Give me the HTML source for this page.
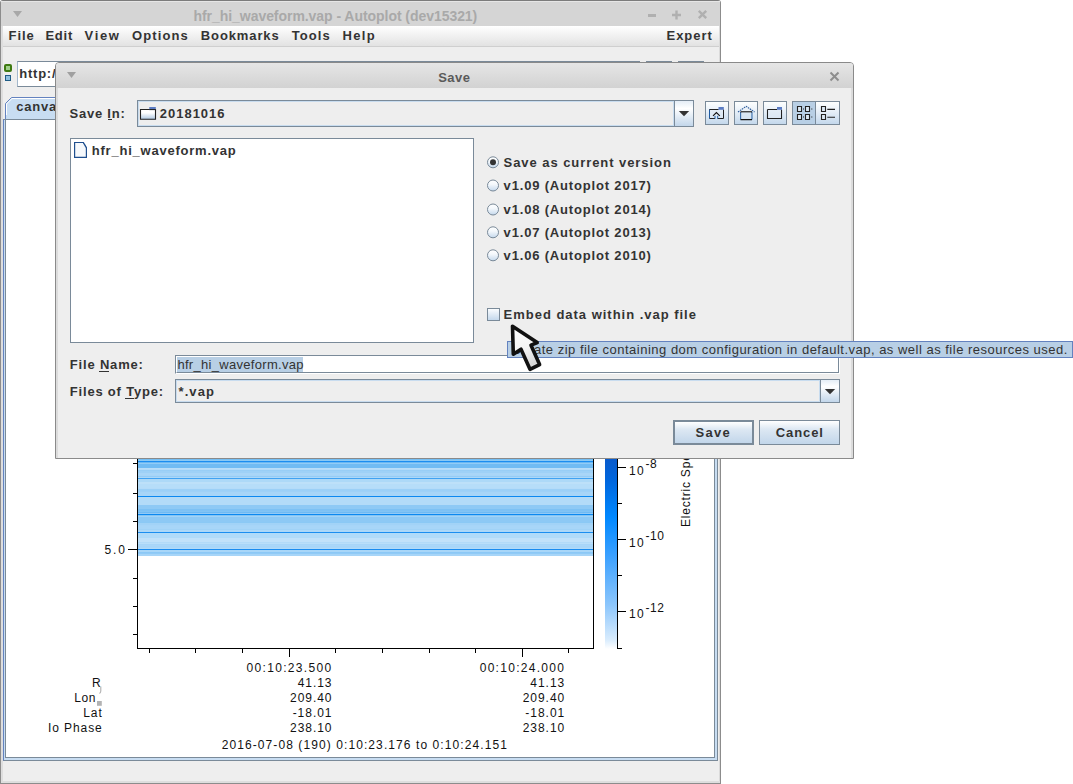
<!DOCTYPE html>
<html><head><meta charset="utf-8">
<style>
html,body{margin:0;padding:0;}
body{width:1073px;height:784px;position:relative;overflow:hidden;background:#fff;font-family:"Liberation Sans",sans-serif;}
.a{position:absolute;box-sizing:border-box;}
.t{position:absolute;white-space:pre;font-family:"Liberation Sans",sans-serif;}
</style></head><body>

<!-- ============ MAIN WINDOW ============ -->
<div class="a" style="left:0;top:0;width:721px;height:784px;background:#eeeeee;border-left:1px solid #8c8c8c;border-top:1px solid #7c7c7c;border-right:1px solid #8c8c8c;border-bottom:1px solid #8c8c8c;border-top-left-radius:3px;border-top-right-radius:3px;z-index:1"></div>
<div class="a" style="left:1px;top:1px;width:719px;height:1px;background:#e6e6e6;z-index:1"></div>
<!-- title bar -->
<div class="a" style="left:1px;top:2px;width:719px;height:24px;background:#d5d5d5;z-index:1"></div>
<svg class="a" style="left:12px;top:10px;z-index:2" width="12" height="8"><path d="M1 1 L10 1 L5.5 7 Z" fill="#a8a8a8"/></svg>
<div class="a" style="left:648px;top:14px;width:8px;height:2.5px;background:#b0b0b0;z-index:2"></div>
<svg class="a" style="left:671px;top:9px;z-index:2" width="12" height="12"><path d="M5.5 1.5 V10.5 M1 6 H10" stroke="#b0b0b0" stroke-width="2.4"/></svg>
<svg class="a" style="left:697px;top:9px;z-index:2" width="12" height="12"><path d="M1.8 1.8 L9.2 9.2 M9.2 1.8 L1.8 9.2" stroke="#b0b0b0" stroke-width="2.4"/></svg>
<!-- menu bar -->
<div class="a" style="left:3px;top:26px;width:716px;height:20px;background:linear-gradient(#ffffff,#e2e2e2);z-index:1"></div>
<div class="a" style="left:1px;top:46px;width:718px;height:1px;background:#cfcfcf;z-index:1"></div>
<div class="a" style="left:719px;top:26px;width:1px;height:757px;background:#dadada;z-index:1"></div>
<div class="a" style="left:1px;top:26px;width:2px;height:757px;background:#dedede;z-index:1"></div>
<div class="a" style="left:1px;top:781px;width:719px;height:2px;background:#dedede;z-index:1"></div>

<!-- toolbar icons -->
<div class="a" style="left:4px;top:64px;width:8px;height:8px;background:#9fd08a;border:2px solid #3f7a12;border-radius:2px;z-index:2"></div>
<div class="a" style="left:5px;top:75px;width:6px;height:6px;background:#8fc0e0;border:1px solid #1f5c85;z-index:2"></div>
<!-- URL field -->
<div class="a" style="left:17px;top:61px;width:610px;height:26px;background:#fff;border:1px solid #7a8a99;border-right:none;border-left-color:#a3b8cc;z-index:2"></div>
<div class="a" style="left:620px;top:61px;width:20px;height:26px;background:#dde8f3;border:1px solid #7a8a99;z-index:2"></div>
<div class="a" style="left:646px;top:61px;width:26px;height:26px;background:#dde8f3;border:1px solid #7a8a99;z-index:2"></div>
<div class="a" style="left:678px;top:61px;width:26px;height:26px;background:#dde8f3;border:1px solid #7a8a99;z-index:2"></div>

<!-- tab -->
<svg class="a" style="left:0;top:95px;z-index:2" width="120" height="26">
  <path d="M5.5 25 L5.5 8.5 L11.5 2.5 L119 2.5 L119 25 Z" fill="#c8ddf2" stroke="#6382bf" stroke-width="1"/>
  <path d="M6.5 20 L6.5 9 L12 3.5 L119 3.5" fill="none" stroke="#ffffff" stroke-width="1"/>
</svg>
<!-- tab panel -->
<div class="a" style="left:3px;top:119px;width:715px;height:642px;background:#c8ddf2;border:1px solid #7a8a99;border-left-color:#6382bf;z-index:2"></div>
<div class="a" style="left:5px;top:119px;width:710px;height:639px;background:#fff;border-left:1px solid #7a8a99;border-top:1px solid #7a8a99;border-right:1px solid #7a8a99;border-bottom:1px solid #7a8a99;z-index:2"></div>

<!-- PLOT -->
<div class="a" style="left:138px;top:455px;width:455px;height:101px;z-index:2;background:linear-gradient(to bottom,#7ac1f4 0px,#7ac1f4 1px,#7ac1f4 1px,#7ac1f4 2px,#8dcaf6 2px,#8dcaf6 3px,#75bff4 3px,#75bff4 4px,#75bff4 4px,#75bff4 5px,#88c8f5 5px,#88c8f5 6px,#1a8cf0 6px,#1a8cf0 7px,#69b8f3 7px,#69b8f3 8px,#92cbf6 8px,#92cbf6 9px,#70bbf3 9px,#70bbf3 10px,#70bbf3 10px,#70bbf3 11px,#70bbf3 11px,#70bbf3 12px,#70bbf3 12px,#70bbf3 13px,#b8ddf9 13px,#b8ddf9 14px,#b4dbf9 14px,#b4dbf9 15px,#98cef6 15px,#98cef6 16px,#9ed1f7 16px,#9ed1f7 17px,#9ed1f7 17px,#9ed1f7 18px,#a9d6f8 18px,#a9d6f8 19px,#a9d6f8 19px,#a9d6f8 20px,#a7d5f8 20px,#a7d5f8 21px,#94ccf6 21px,#94ccf6 22px,#add8f8 22px,#add8f8 23px,#40a2f2 23px,#40a2f2 24px,#add9f8 24px,#add9f8 25px,#add9f8 25px,#add9f8 26px,#add9f8 26px,#add9f8 27px,#bde0f9 27px,#bde0f9 28px,#bde0f9 28px,#bde0f9 29px,#b6ddf9 29px,#b6ddf9 30px,#b6ddf9 30px,#b6ddf9 31px,#b6ddf9 31px,#b6ddf9 32px,#b6ddf9 32px,#b6ddf9 33px,#b4dbf9 33px,#b4dbf9 34px,#9cd0f7 34px,#9cd0f7 35px,#9cd0f7 35px,#9cd0f7 36px,#9fd1f7 36px,#9fd1f7 37px,#a7d5f8 37px,#a7d5f8 38px,#a7d5f8 38px,#a7d5f8 39px,#a7d5f8 39px,#a7d5f8 40px,#a7d5f8 40px,#a7d5f8 41px,#0c88f0 41px,#0c88f0 42px,#b3dbf8 42px,#b3dbf8 43px,#b3dbf8 43px,#b3dbf8 44px,#b3dbf8 44px,#b3dbf8 45px,#b3dbf8 45px,#b3dbf8 46px,#b3dbf8 46px,#b3dbf8 47px,#b3dbf8 47px,#b3dbf8 48px,#b3dbf8 48px,#b3dbf8 49px,#b3dbf8 49px,#b3dbf8 50px,#8ec9f5 50px,#8ec9f5 51px,#8ec9f5 51px,#8ec9f5 52px,#8ec9f5 52px,#8ec9f5 53px,#8ec9f5 53px,#8ec9f5 54px,#7dc1f4 54px,#7dc1f4 55px,#7dc1f4 55px,#7dc1f4 56px,#81c3f4 56px,#81c3f4 57px,#6fbaf3 57px,#6fbaf3 58px,#92caf6 58px,#92caf6 59px,#0c88f0 59px,#0c88f0 60px,#83c5f5 60px,#83c5f5 61px,#a2d3f7 61px,#a2d3f7 62px,#8dc9f5 62px,#8dc9f5 63px,#8dc9f5 63px,#8dc9f5 64px,#8dc9f5 64px,#8dc9f5 65px,#8dc9f5 65px,#8dc9f5 66px,#8dc9f5 66px,#8dc9f5 67px,#8bc9f5 67px,#8bc9f5 68px,#a2d3f7 68px,#a2d3f7 69px,#a2d3f7 69px,#a2d3f7 70px,#a7d5f8 70px,#a7d5f8 71px,#a8d6f8 71px,#a8d6f8 72px,#a8d6f8 72px,#a8d6f8 73px,#a8d6f8 73px,#a8d6f8 74px,#a1d3f7 74px,#a1d3f7 75px,#add8f8 75px,#add8f8 76px,#add8f8 76px,#add8f8 77px,#1c8ef0 77px,#1c8ef0 78px,#b1dbf9 78px,#b1dbf9 79px,#b1dbf9 79px,#b1dbf9 80px,#b1dbf9 80px,#b1dbf9 81px,#b1dbf9 81px,#b1dbf9 82px,#b1dbf9 82px,#b1dbf9 83px,#c2e2fa 83px,#c2e2fa 84px,#c2e2fa 84px,#c2e2fa 85px,#c2e2fa 85px,#c2e2fa 86px,#c2e2fa 86px,#c2e2fa 87px,#b2dbf9 87px,#b2dbf9 88px,#badffa 88px,#badffa 89px,#a8d6f9 89px,#a8d6f9 90px,#abd7f9 90px,#abd7f9 91px,#a7d6f9 91px,#a7d6f9 92px,#aad7f9 92px,#aad7f9 93px,#b1daf9 93px,#b1daf9 94px,#1a8cf0 94px,#1a8cf0 95px,#a8d6f8 95px,#a8d6f8 96px,#a8d6f8 96px,#a8d6f8 97px,#8cc8f6 97px,#8cc8f6 98px,#91cbf6 98px,#91cbf6 99px,#a7d5f8 99px,#a7d5f8 100px,#a7d5f8 100px,#a7d5f8 101px);"></div>
<!-- axes -->
<div class="a" style="left:137px;top:455px;width:1px;height:194px;background:#000;z-index:3"></div>
<div class="a" style="left:137px;top:648px;width:457px;height:1px;background:#000;z-index:3"></div>
<div class="a" style="left:593px;top:455px;width:1px;height:194px;background:#000;z-index:3"></div>
<svg class="a" style="left:120px;top:455px;z-index:3" width="20" height="200">
  <path d="M13 8.5 H17 M13 38.5 H17 M13 66.5 H17 M8 94.5 H17 M13 123.5 H17 M13 151.5 H17 M13 179.5 H17" stroke="#000" stroke-width="1"/>
</svg>
<svg class="a" style="left:137px;top:648px;z-index:3" width="460" height="12">
  <path d="M12.5 1 V5 M58.5 1 V5 M105.5 1 V5 M152.5 1 V9 M198.5 1 V5 M245.5 1 V5 M292.5 1 V5 M338.5 1 V5 M385.5 1 V9 M431.5 1 V5" stroke="#000" stroke-width="1"/>
</svg>
<!-- colorbar -->
<div class="a" style="left:605px;top:455px;width:13px;height:194px;z-index:3;background:linear-gradient(to bottom,#0a58c8 0px,#0066dd 25px,#0088ff 62px,#3aa0ff 100px,#8cc6fc 150px,#d9ecfd 185px,#ffffff 194px);"></div>
<svg class="a" style="left:615px;top:455px;z-index:3" width="20" height="200">
  <path d="M2.5 0 V193.5 M2 12.5 H11 M2 48.5 H7 M2 84.5 H11 M2 120.5 H7 M2 156.5 H11 M2 193.5 H7" stroke="#000" stroke-width="1"/>
</svg>
<span class="t" style="left:629px;top:464.84px;font-size:12px;line-height:12px;letter-spacing:1.3px;color:#111;z-index:3">10</span>
<span class="t" style="left:645.5px;top:458.44px;font-size:12px;line-height:12px;letter-spacing:0.6px;color:#111;z-index:3">-8</span>
<span class="t" style="left:629px;top:536.64px;font-size:12px;line-height:12px;letter-spacing:1.3px;color:#111;z-index:3">10</span>
<span class="t" style="left:645.5px;top:530.24px;font-size:12px;line-height:12px;letter-spacing:0.6px;color:#111;z-index:3">-10</span>
<span class="t" style="left:629px;top:608.14px;font-size:12px;line-height:12px;letter-spacing:1.3px;color:#111;z-index:3">10</span>
<span class="t" style="left:645.5px;top:601.74px;font-size:12px;line-height:12px;letter-spacing:0.6px;color:#111;z-index:3">-12</span>
<span class="t" style="left:680px;top:527px;font-size:12px;line-height:12px;letter-spacing:0.8px;color:#111;z-index:3;transform-origin:0 0;transform:rotate(-90deg)">Electric Spectral Density</span>

<svg class="a" style="left:97px;top:684px;z-index:3" width="8" height="24">
 <path d="M3.8 2.5 V7 Q3.8 8.5 2.5 9.5" fill="none" stroke="#b0b0b0" stroke-width="1.1"/>
 <rect x="-0.8" y="17" width="5.6" height="4.8" fill="#b3b3b3"/>
</svg>
<!-- ============ DIALOG ============ -->
<div class="a" style="left:55px;top:62px;width:799px;height:397px;background:#eeeeee;border:1px solid #8a8a8a;border-top-left-radius:4px;border-top-right-radius:4px;z-index:10"></div>
<div class="a" style="left:56px;top:63px;width:797px;height:25px;background:linear-gradient(#e6e6e6,#d2d2d2);border-top-left-radius:3px;border-top-right-radius:3px;z-index:10"></div>
<div class="a" style="left:56px;top:88px;width:2px;height:370px;background:#dcdcdc;z-index:10"></div>
<div class="a" style="left:851px;top:88px;width:2px;height:370px;background:#dcdcdc;z-index:10"></div>
<svg class="a" style="left:66px;top:71px;z-index:11" width="12" height="8"><path d="M1 1 L10 1 L5.5 7 Z" fill="#a0a0a0"/></svg>
<svg class="a" style="left:829px;top:71px;z-index:11" width="12" height="12"><path d="M1.5 1.5 L9.5 9.5 M9.5 1.5 L1.5 9.5" stroke="#8e8e8e" stroke-width="2"/></svg>

<!-- Save In combo -->
<div class="a" style="left:137px;top:100px;width:557px;height:27px;background:#eeeeee;border:1px solid #7a8a99;z-index:11"></div>
<div class="a" style="left:138px;top:101px;width:536px;height:25px;background:#eeeeee;border:1px solid #c8dcef;z-index:11"></div>
<div class="a" style="left:674px;top:101px;width:19px;height:25px;background:linear-gradient(#e4edf6 0%,#ffffff 30%,#c2d6ea 100%);border-left:1px solid #7a8a99;z-index:11"></div>
<svg class="a" style="left:678px;top:110px;z-index:12" width="14" height="10"><path d="M0.8 1 L11.2 1 L6 6.2 Z" fill="#333"/></svg>
<!-- folder icon -->
<svg class="a" style="left:139px;top:105px;z-index:12" width="20" height="16">
 <defs><linearGradient id="fg" x1="0" y1="0" x2="0" y2="1"><stop offset="0" stop-color="#ffffff"/><stop offset="0.35" stop-color="#ffffff"/><stop offset="1" stop-color="#b0c8e2"/></linearGradient></defs>
 <path d="M1.5 4.5 H16.5 V14.3 H1.5 Z" fill="url(#fg)" stroke="#222" stroke-width="1.1"/>
 <path d="M10.3 2 H16.8 V4.6 H10.3 Z" fill="#5b7cc4"/>
 <path d="M10.3 4.6 H16.8" stroke="#222" stroke-width="1"/>
</svg>

<!-- toolbar buttons -->
<div class="a" style="left:705px;top:101px;width:24px;height:24px;background:linear-gradient(#fdfefe 0%,#eef4fa 30%,#c4d8ec 100%);border:1px solid #7a8a99;z-index:11"></div>
<div class="a" style="left:734px;top:101px;width:24px;height:24px;background:linear-gradient(#fdfefe 0%,#eef4fa 30%,#c4d8ec 100%);border:1px solid #7a8a99;z-index:11"></div>
<div class="a" style="left:763px;top:101px;width:24px;height:24px;background:linear-gradient(#fdfefe 0%,#eef4fa 30%,#c4d8ec 100%);border:1px solid #7a8a99;z-index:11"></div>
<div class="a" style="left:792px;top:101px;width:24px;height:24px;background:#b8cfe5;border:1px solid #7a8a99;z-index:11"></div>
<div class="a" style="left:815px;top:101px;width:25px;height:24px;background:linear-gradient(#fdfefe 0%,#eef4fa 30%,#c4d8ec 100%);border:1px solid #7a8a99;z-index:11"></div>
<svg class="a" style="left:705px;top:101px;z-index:12" width="140" height="26">
 <!-- up folder -->
 <path d="M4.5 17.5 V8.5 H13.5" fill="none" stroke="#1f5aa0"/>
 <path d="M4.5 8.5 H13.5 M18.5 8.5 V17.5 H12.7 M10 17.5 H4.5" fill="none" stroke="#222"/>
 <path d="M13.5 6 H18.8 V8.8 H13.5 Z" fill="#5b7cc4"/>
 <path d="M5 9 H18 V17 H5 Z" fill="#dfe9f4" opacity="0.6"/>
 <path d="M8 14.9 L11.4 11.5 L14.8 14.9" fill="none" stroke="#111" stroke-width="1.1"/>
 <path d="M10 14.9 V17.8 M12.7 14.9 V17.8" fill="none" stroke="#1f5aa0" stroke-width="1"/>
 <!-- home -->
 <path d="M35.7 11 V18.5 M46.9 11 V18.5" fill="none" stroke="#1f5aa0" stroke-width="1.1"/>
 <path d="M35.5 10.8 H47 M35.5 18.6 H47" fill="none" stroke="#111" stroke-width="1.3"/>
 <path d="M36.3 11.5 H46.3 V18 H36.3 Z" fill="#d6e4f2" opacity="0.7"/>
 <path d="M33 11 L41.2 5.3 L49.5 11" fill="none" stroke="#2a5a9a" stroke-width="1.1" stroke-dasharray="1.6 0.8"/>
 <!-- new folder -->
 <path d="M62.5 8.5 H72 M62.5 8.5 V17.5 H76.5 V8.5" fill="none" stroke="#222" stroke-width="1.1"/>
 <path d="M63 9 H76 V17 H63 Z" fill="#dfe9f4" opacity="0.6"/>
 <path d="M72 6 H77 V8.8 H72 Z" fill="#5b7cc4"/>
 <!-- details grid -->
 <path d="M92.5 5.5 H96.5 V10.5 H92.5 Z M100.5 5.5 H104.5 V10.5 H100.5 Z M92.5 13.5 H96.5 V18.5 H92.5 Z M100.5 13.5 H104.5 V18.5 H100.5 Z" fill="#dce8f4" stroke="#222" stroke-width="1.1"/>
 <path d="M98 8 H99 M106.3 8 H107.3 M98 16 H99 M106.3 16 H107.3" stroke="#222" stroke-width="1.1"/>
 <!-- list -->
 <path d="M116.5 5.5 H120.5 V10.5 H116.5 Z M116.5 13.5 H120.5 V18.5 H116.5 Z" fill="#dce8f4" stroke="#222" stroke-width="1.1"/>
 <path d="M122.3 8.4 H130 M122.3 16.2 H130" stroke="#222" stroke-width="1.1"/>
</svg>

<!-- file list -->
<div class="a" style="left:70px;top:138px;width:404px;height:205px;background:#fff;border:1px solid #7a8a99;z-index:11"></div>
<svg class="a" style="left:73px;top:141px;z-index:12" width="16" height="18">
 <path d="M1.6 1.5 H10.3 L13.4 6.6 V16.3 H1.6 Z" fill="#f6f9fc" stroke="#1f4f8f" stroke-width="1.2"/>
 <path d="M10.3 1.5 L13.4 6.6" fill="none" stroke="#1f4f8f" stroke-width="1.2" stroke-dasharray="1.2 0.6"/>
</svg>

<!-- radios -->
<svg class="a" style="left:485px;top:153px;z-index:12" width="16" height="110">
 <defs><linearGradient id="rg" x1="0" y1="0" x2="0" y2="1"><stop offset="0" stop-color="#ffffff"/><stop offset="0.4" stop-color="#f4f8fc"/><stop offset="1" stop-color="#c4d8ec"/></linearGradient></defs>
 <circle cx="8" cy="9.3" r="5.5" fill="url(#rg)" stroke="#7a8a99"/>
 <circle cx="8" cy="9.3" r="3" fill="#333"/>
 <circle cx="8" cy="32.5" r="5.5" fill="url(#rg)" stroke="#7a8a99"/>
 <circle cx="8" cy="56.5" r="5.5" fill="url(#rg)" stroke="#7a8a99"/>
 <circle cx="8" cy="79.3" r="5.5" fill="url(#rg)" stroke="#7a8a99"/>
 <circle cx="8" cy="102.3" r="5.5" fill="url(#rg)" stroke="#7a8a99"/>
</svg>
<!-- checkbox -->
<div class="a" style="left:487px;top:308px;width:13px;height:13px;background:linear-gradient(#fafcfe,#c4d8ec);border:1px solid #7a8a99;z-index:12"></div>

<!-- file name field -->
<div class="a" style="left:175px;top:355px;width:665px;height:19px;background:#fff;border:1px solid #fff;border-top-color:#7a8a99;border-left-color:#7a8a99;z-index:11"></div>
<div class="a" style="left:176px;top:356px;width:663px;height:17px;background:#fff;border:1px solid #7a8a99;border-top-color:#fff;border-left-color:#fff;z-index:11"></div>
<div class="a" style="left:177px;top:357px;width:126px;height:15px;background:#b8cfe5;z-index:11"></div>
<div class="a" style="left:99px;top:371px;width:10px;height:1px;background:#333;z-index:12"></div>
<div class="a" style="left:125px;top:398px;width:9px;height:1px;background:#333;z-index:12"></div>
<div class="a" style="left:108px;top:119px;width:4px;height:1px;background:#333;z-index:12"></div>

<!-- files of type combo -->
<div class="a" style="left:175px;top:379px;width:665px;height:24px;background:#eeeeee;border:1px solid #7a8a99;z-index:11"></div>
<div class="a" style="left:176px;top:380px;width:644px;height:22px;border:1px solid #c8dcef;z-index:11"></div>
<div class="a" style="left:820px;top:380px;width:19px;height:22px;background:linear-gradient(#e4edf6 0%,#ffffff 30%,#c2d6ea 100%);border-left:1px solid #7a8a99;z-index:11"></div>
<svg class="a" style="left:824px;top:388px;z-index:12" width="14" height="10"><path d="M0.8 1 L11.2 1 L6 6.2 Z" fill="#333"/></svg>

<!-- buttons -->
<div class="a" style="left:673px;top:420px;width:81px;height:25px;background:linear-gradient(#ffffff 0%,#dde8f3 35%,#c2d6ea 100%);border:2px solid #7a8a99;z-index:11"></div>
<div class="a" style="left:759px;top:420px;width:81px;height:25px;background:linear-gradient(#ffffff 0%,#dde8f3 35%,#c2d6ea 100%);border:1px solid #7a8a99;z-index:11"></div>

<!-- tooltip -->
<div class="a" style="left:507px;top:341px;width:566px;height:17px;background:#b8cfe5;border:1px solid #6382bf;z-index:20"></div>

<!-- cursor -->
<svg class="a" style="left:500px;top:318px;z-index:30" width="48" height="56">
 <defs><linearGradient id="cg" x1="0" y1="0" x2="0.3" y2="1"><stop offset="0" stop-color="#ffffff"/><stop offset="0.6" stop-color="#f4f4f4"/><stop offset="1" stop-color="#d8d8d8"/></linearGradient></defs>
 <path d="M12.5 8.3 L13.3 36.2 L21 31.2 L30 51.3 L39.6 46.6 L31 27.2 L37.2 24.6 Z" fill="url(#cg)" stroke="#111" stroke-width="3.6" stroke-linejoin="round"/>
</svg>
<span class="t" id="title" style="left:193.50px;top:8.65px;font-weight:bold;font-size:14px;line-height:14px;color:#a9a9a9;letter-spacing:-0.050px;z-index:3;">hfr_hi_waveform.vap - Autoplot (dev15321)</span>
<span class="t" id="m1" style="left:8.50px;top:29.00px;font-weight:bold;font-size:13px;line-height:13px;color:#333;letter-spacing:0.965px;z-index:3;">File</span>
<span class="t" id="m2" style="left:45.40px;top:29.00px;font-weight:bold;font-size:13px;line-height:13px;color:#333;letter-spacing:0.779px;z-index:3;">Edit</span>
<span class="t" id="m3" style="left:84.60px;top:29.00px;font-weight:bold;font-size:13px;line-height:13px;color:#333;letter-spacing:1.636px;z-index:3;">View</span>
<span class="t" id="m4" style="left:131.90px;top:29.00px;font-weight:bold;font-size:13px;line-height:13px;color:#333;letter-spacing:1.132px;z-index:3;">Options</span>
<span class="t" id="m5" style="left:200.80px;top:29.00px;font-weight:bold;font-size:13px;line-height:13px;color:#333;letter-spacing:0.886px;z-index:3;">Bookmarks</span>
<span class="t" id="m6" style="left:291.70px;top:29.00px;font-weight:bold;font-size:13px;line-height:13px;color:#333;letter-spacing:1.074px;z-index:3;">Tools</span>
<span class="t" id="m7" style="left:342.40px;top:29.00px;font-weight:bold;font-size:13px;line-height:13px;color:#333;letter-spacing:1.376px;z-index:3;">Help</span>
<span class="t" id="m8" style="left:666.50px;top:29.00px;font-weight:bold;font-size:13px;line-height:13px;color:#333;letter-spacing:0.966px;z-index:3;">Expert</span>
<span class="t" id="http" style="left:19.20px;top:67.00px;font-weight:bold;font-size:13px;line-height:13px;color:#333;letter-spacing:0.780px;z-index:3;">http:/</span>
<span class="t" id="canva" style="left:16.20px;top:100.00px;font-weight:bold;font-size:13px;line-height:13px;color:#333;letter-spacing:0.780px;z-index:3;">canvas</span>
<span class="t" id="dtitle" style="left:438.20px;top:71.00px;font-weight:bold;font-size:13px;line-height:13px;color:#5a5a5a;letter-spacing:0.442px;z-index:12;">Save</span>
<span class="t" id="savein" style="left:69.50px;top:106.90px;font-weight:bold;font-size:13px;line-height:13px;color:#333;letter-spacing:0.777px;z-index:12;">Save In:</span>
<span class="t" id="dir" style="left:159.80px;top:106.90px;font-weight:bold;font-size:13px;line-height:13px;color:#333;letter-spacing:0.979px;z-index:12;">20181016</span>
<span class="t" id="file" style="left:91.80px;top:144.20px;font-weight:bold;font-size:13px;line-height:13px;color:#333;letter-spacing:0.770px;z-index:12;">hfr_hi_waveform.vap</span>
<span class="t" id="r1" style="left:503.60px;top:156.00px;font-weight:bold;font-size:13px;line-height:13px;color:#333;letter-spacing:0.936px;z-index:12;">Save as current version</span>
<span class="t" id="r2" style="left:503.60px;top:179.30px;font-weight:bold;font-size:13px;line-height:13px;color:#333;letter-spacing:0.827px;z-index:12;">v1.09 (Autoplot 2017)</span>
<span class="t" id="r3" style="left:503.60px;top:203.30px;font-weight:bold;font-size:13px;line-height:13px;color:#333;letter-spacing:0.827px;z-index:12;">v1.08 (Autoplot 2014)</span>
<span class="t" id="r4" style="left:503.60px;top:226.00px;font-weight:bold;font-size:13px;line-height:13px;color:#333;letter-spacing:0.827px;z-index:12;">v1.07 (Autoplot 2013)</span>
<span class="t" id="r5" style="left:503.60px;top:249.00px;font-weight:bold;font-size:13px;line-height:13px;color:#333;letter-spacing:0.827px;z-index:12;">v1.06 (Autoplot 2010)</span>
<span class="t" id="emb" style="left:503.60px;top:308.00px;font-weight:bold;font-size:13px;line-height:13px;color:#333;letter-spacing:0.978px;z-index:12;">Embed data within .vap file</span>
<span class="t" id="fname" style="left:69.80px;top:358.00px;font-weight:bold;font-size:13px;line-height:13px;color:#333;letter-spacing:0.817px;z-index:12;">File Name:</span>
<span class="t" id="ftype" style="left:69.80px;top:384.70px;font-weight:bold;font-size:13px;line-height:13px;color:#333;letter-spacing:0.806px;z-index:12;">Files of Type:</span>
<span class="t" id="fval" style="left:177.40px;top:357.80px;font-weight:normal;font-size:13px;line-height:13px;color:#333;letter-spacing:0.307px;z-index:12;">hfr_hi_waveform.vap</span>
<span class="t" id="tval" style="left:178.60px;top:384.70px;font-weight:bold;font-size:13px;line-height:13px;color:#333;letter-spacing:1.055px;z-index:12;">*.vap</span>
<span class="t" id="bsave" style="left:695.50px;top:425.70px;font-weight:bold;font-size:13px;line-height:13px;color:#333;letter-spacing:1.308px;z-index:12;">Save</span>
<span class="t" id="bcancel" style="left:775.70px;top:425.70px;font-weight:bold;font-size:13px;line-height:13px;color:#333;letter-spacing:0.932px;z-index:12;">Cancel</span>
<span class="t" id="tip" style="left:511.60px;top:343.00px;font-weight:normal;font-size:13px;line-height:13px;color:#333;letter-spacing:0.493px;z-index:22;">Create zip file containing dom configuration in default.vap, as well as file resources used.</span>
<span class="t" id="y5" style="left:104.50px;top:543.84px;font-weight:normal;font-size:12px;line-height:12px;color:#111;letter-spacing:1.906px;z-index:3;">5.0</span>
<span class="t" id="x1" style="left:246.60px;top:662.04px;font-weight:normal;font-size:12px;line-height:12px;color:#111;letter-spacing:1.311px;z-index:3;">00:10:23.500</span>
<span class="t" id="x2" style="left:479.70px;top:662.04px;font-weight:normal;font-size:12px;line-height:12px;color:#111;letter-spacing:1.284px;z-index:3;">00:10:24.000</span>
<span class="t" id="lR" style="left:92.10px;top:676.64px;font-weight:normal;font-size:12px;line-height:12px;color:#111;letter-spacing:0.960px;z-index:3;">R</span>
<span class="t" id="lLon" style="left:74.20px;top:691.64px;font-weight:normal;font-size:12px;line-height:12px;color:#111;letter-spacing:0.584px;z-index:3;">Lon</span>
<span class="t" id="lLat" style="left:83.19px;top:706.84px;font-weight:normal;font-size:12px;line-height:12px;color:#111;letter-spacing:0.960px;z-index:3;">Lat</span>
<span class="t" id="lIo" style="left:48.00px;top:721.84px;font-weight:normal;font-size:12px;line-height:12px;color:#111;letter-spacing:0.918px;z-index:3;">Io Phase</span>
<span class="t" id="v1a" style="left:297.63px;top:676.84px;font-weight:normal;font-size:12px;line-height:12px;color:#111;letter-spacing:0.960px;z-index:3;">41.13</span>
<span class="t" id="v1b" style="left:290.00px;top:691.84px;font-weight:normal;font-size:12px;line-height:12px;color:#111;letter-spacing:0.960px;z-index:3;">209.40</span>
<span class="t" id="v1c" style="left:292.67px;top:706.84px;font-weight:normal;font-size:12px;line-height:12px;color:#111;letter-spacing:0.960px;z-index:3;">-18.01</span>
<span class="t" id="v1d" style="left:290.00px;top:721.84px;font-weight:normal;font-size:12px;line-height:12px;color:#111;letter-spacing:0.960px;z-index:3;">238.10</span>
<span class="t" id="v2a" style="left:530.33px;top:676.84px;font-weight:normal;font-size:12px;line-height:12px;color:#111;letter-spacing:0.960px;z-index:3;">41.13</span>
<span class="t" id="v2b" style="left:522.70px;top:691.84px;font-weight:normal;font-size:12px;line-height:12px;color:#111;letter-spacing:0.960px;z-index:3;">209.40</span>
<span class="t" id="v2c" style="left:525.37px;top:706.84px;font-weight:normal;font-size:12px;line-height:12px;color:#111;letter-spacing:0.960px;z-index:3;">-18.01</span>
<span class="t" id="v2d" style="left:522.70px;top:721.84px;font-weight:normal;font-size:12px;line-height:12px;color:#111;letter-spacing:0.960px;z-index:3;">238.10</span>
<span class="t" id="range" style="left:221.70px;top:739.34px;font-weight:normal;font-size:12px;line-height:12px;color:#111;letter-spacing:1.087px;z-index:3;">2016-07-08 (190) 0:10:23.176 to 0:10:24.151</span>
</body></html>
